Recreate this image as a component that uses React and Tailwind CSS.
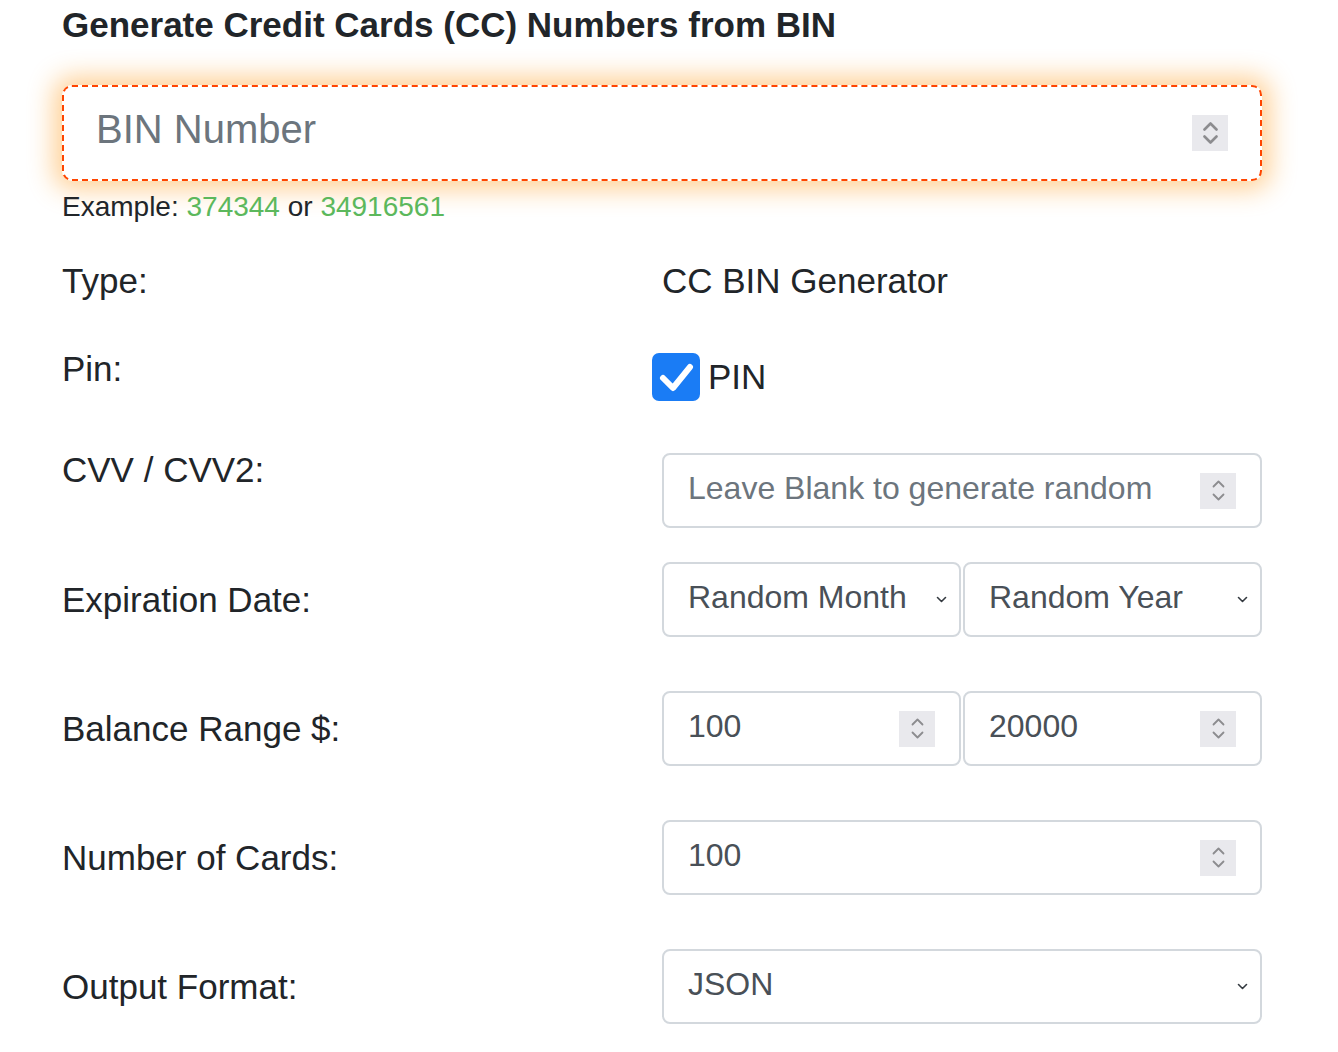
import React from "react";

function Spinner({ big }) {
  const w = big ? 15 : 13;
  const h = big ? 9 : 8;
  const sw = big ? 2.6 : 1.8;
  return (
    <div className={`w-9 h-9 bg-[#e9e9ed] flex flex-col items-center justify-center shrink-0 ${big ? "gap-[4px]" : "gap-[5px]"}`}>
      <svg width={w} height={h} viewBox={`0 0 ${w} ${h}`}>
        <path d={`M1.5 ${h - 1.5} L${w / 2} 1.5 L${w - 1.5} ${h - 1.5}`} fill="none" stroke="#8c8c8f" strokeWidth={sw} strokeLinecap="round" strokeLinejoin="round" />
      </svg>
      <svg width={w} height={h} viewBox={`0 0 ${w} ${h}`}>
        <path d={`M1.5 1.5 L${w / 2} ${h - 1.5} L${w - 1.5} 1.5`} fill="none" stroke="#8c8c8f" strokeWidth={sw} strokeLinecap="round" strokeLinejoin="round" />
      </svg>
    </div>
  );
}

function Chevron() {
  return (
    <svg width="11" height="7" viewBox="0 0 11 7" className="shrink-0">
      <path d="M1.5 1.5 L5.5 5.5 L9.5 1.5" fill="none" stroke="#343a40" strokeWidth="1.6" strokeLinecap="round" strokeLinejoin="round" />
    </svg>
  );
}

function NumberBox({ value, placeholder, className = "" }) {
  return (
    <div className={`h-[75px] border-2 border-[#d3d8dd] rounded-[8px] bg-white flex items-center pl-6 pr-6 ${className}`}>
      <input
        type="text"
        readOnly
        value={value || ""}
        placeholder={placeholder}
        className="flex-1 min-w-0 mb-[6px] bg-transparent outline-none text-[32px] text-[#495057] placeholder:text-[#6c757d] leading-[40px]"
      />
      <Spinner />
    </div>
  );
}

function SelectBox({ value, className = "" }) {
  return (
    <div className={`h-[75px] border-2 border-[#d3d8dd] rounded-[8px] bg-white flex items-center justify-between pl-6 pr-[12px] ${className}`}>
      <span className="text-[32px] text-[#495057] leading-[40px] mb-[6px]">{value}</span>
      <Chevron />
    </div>
  );
}

function Label({ children }) {
  return <div className="w-[600px] shrink-0 text-[35px] leading-[52px] text-[#212529]">{children}</div>;
}

export default function App() {
  return (
    <div className="min-h-[1052px] bg-white font-['Liberation_Sans',Arial,sans-serif] text-[#212529]">
      <div className="w-[1200px] ml-[62px] flex flex-col">
        <h1 className="pt-[4px] text-[35px] leading-[42px] font-bold text-[#212529]">
          Generate Credit Cards (CC) Numbers from BIN
        </h1>

        <div className="mt-[39px] h-[96px] border-2 border-dashed border-[#ff4500] rounded-[10px] bg-white shadow-[0_0_26px_8px_rgba(255,150,20,0.45)] flex items-center pl-[32px] pr-[32px]">
          <input
            type="text"
            readOnly
            placeholder="BIN Number"
            className="flex-1 min-w-0 mb-[8px] bg-transparent outline-none text-[40px] leading-[48px] text-[#495057] placeholder:text-[#6c757d]"
          />
          <Spinner big />
        </div>

        <div className="mt-[5px] text-[28px] leading-[42px] text-[#212529]">
          Example: <span className="text-[#5cb85c]">374344</span> or{" "}
          <span className="text-[#5cb85c]">34916561</span>
        </div>

        <div className="mt-[27px] flex items-start">
          <Label>Type:</Label>
          <div className="text-[35px] leading-[52px] text-[#212529]">CC BIN Generator</div>
        </div>

        <div className="mt-[36px] flex items-start">
          <Label>Pin:</Label>
          <div className="mt-[10px] -ml-[10px] h-[48px] flex items-center gap-[8px]">
            <div className="w-[48px] h-[48px] rounded-[7px] bg-[#1a7cf5] flex items-center justify-center">
              <svg width="48" height="48" viewBox="0 0 48 48">
                <path d="M11 25 L21 35 L38 14" fill="none" stroke="#ffffff" strokeWidth="6" strokeLinecap="round" strokeLinejoin="round" />
              </svg>
            </div>
            <span className="text-[35px] leading-[44px] text-[#212529]">PIN</span>
          </div>
        </div>

        <div className="mt-[43px] flex items-start">
          <Label>CVV / CVV2:</Label>
          <NumberBox placeholder="Leave Blank to generate random" className="mt-[9px] w-[600px]" />
        </div>

        <div className="mt-[34px] flex items-center">
          <Label>Expiration Date:</Label>
          <div className="w-[600px] flex gap-[2px]">
            <SelectBox value="Random Month" className="w-[299px]" />
            <SelectBox value="Random Year" className="w-[299px]" />
          </div>
        </div>

        <div className="mt-[54px] flex items-center">
          <Label>Balance Range $:</Label>
          <div className="w-[600px] flex gap-[2px]">
            <NumberBox value="100" className="w-[299px]" />
            <NumberBox value="20000" className="w-[299px]" />
          </div>
        </div>

        <div className="mt-[54px] flex items-center">
          <Label>Number of Cards:</Label>
          <NumberBox value="100" className="w-[600px]" />
        </div>

        <div className="mt-[54px] flex items-center">
          <Label>Output Format:</Label>
          <SelectBox value="JSON" className="w-[600px]" />
        </div>
      </div>
    </div>
  );
}
